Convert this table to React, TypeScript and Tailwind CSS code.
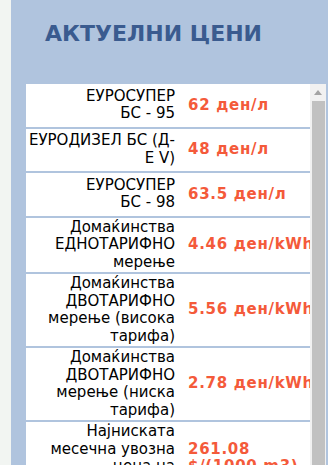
const rows: { label: string[]; value: string[] }[] = [
  { label: ["ЕУРОСУПЕР", "БС - 95"], value: ["62 ден/л"] },
  { label: ["ЕУРОДИЗЕЛ БС (Д-", "Е V)"], value: ["48 ден/л"] },
  { label: ["ЕУРОСУПЕР", "БС - 98"], value: ["63.5 ден/л"] },
  { label: ["Домаќинства", "ЕДНОТАРИФНО", "мерење"], value: ["4.46 ден/kWh"] },
  { label: ["Домаќинства", "ДВОТАРИФНО", "мерење (висока", "тарифа)"], value: ["5.56 ден/kWh"] },
  { label: ["Домаќинства", "ДВОТАРИФНО", "мерење (ниска", "тарифа)"], value: ["2.78 ден/kWh"] },
  { label: ["Најниската", "месечна увозна", "цена на", "природен гас"], value: ["261.08", "$/(1000 m3)"] },
];

export default function App() {
  return (
    <div className="flex h-[465px] w-[328px] overflow-hidden font-['DejaVu_Sans',sans-serif]">
      <div className="w-[11px] shrink-0 bg-[#f2f5f2]" />

      <div className="flex min-w-0 flex-1 flex-col bg-[#b0c4de] pl-[15px] pr-[2px]">
        <h2 className="pl-[19px] pt-[21px] text-[22px] font-bold leading-[26px] text-[#3a5b8f]">
          АКТУЕЛНИ ЦЕНИ
        </h2>

        <div className="mt-[37px] flex min-h-0 flex-1">
          <div className="min-w-0 flex-1 overflow-hidden bg-white">
            {rows.map((row, i) => (
              <div key={i} className="flex w-[340px] items-center border-b-2 border-[#b0c4de]">
                <div className="w-[152px] shrink-0 py-[1px] pr-[3px] text-right text-[15px] leading-[17.5px] text-black">
                  {row.label.map((line, j) => (
                    <div key={j}>{line}</div>
                  ))}
                </div>
                <div className="whitespace-nowrap py-[12.5px] pl-[10px] text-[15px] font-bold leading-[17.5px] tracking-[0.7px] text-[#f45a3a]">
                  {row.value.map((line, j) => (
                    <div key={j}>{line}</div>
                  ))}
                </div>
              </div>
            ))}
          </div>

          {/* scrollbar */}
          <div className="flex w-[16px] shrink-0 flex-col bg-[#f1f1f1]">
            <div className="flex h-[17px] items-center justify-center">
              <svg width="8" height="5" viewBox="0 0 8 5">
                <polygon points="4,0 8,5 0,5" fill="#a3a3a3" />
              </svg>
            </div>
            <div className="ml-[2px] mr-[1px] flex-1 bg-[#c1c1c1]" />
          </div>
        </div>
      </div>
    </div>
  );
}
